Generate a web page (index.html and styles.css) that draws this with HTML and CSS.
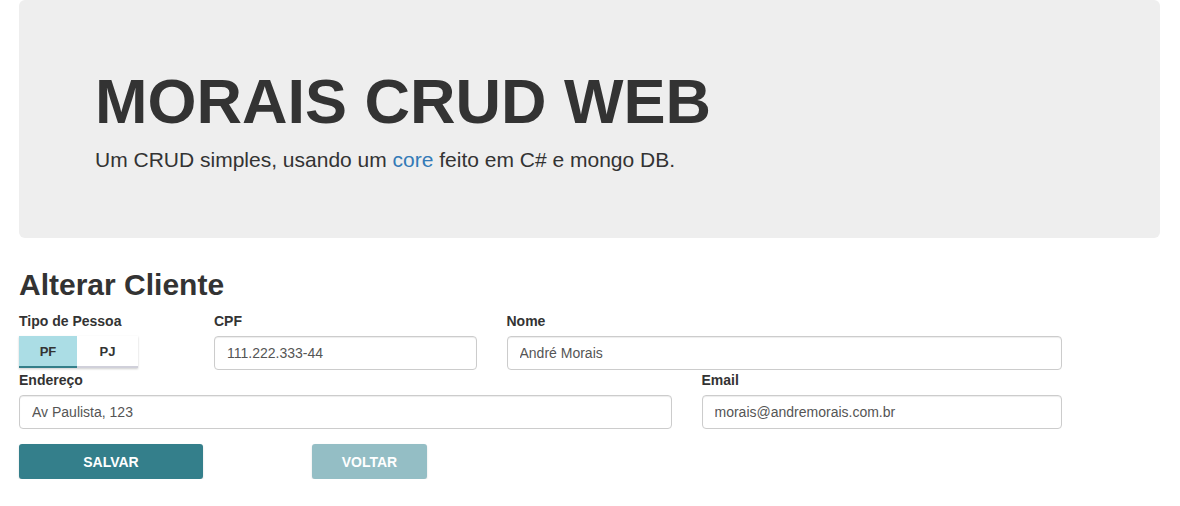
FILE: index.html
```html
<!DOCTYPE html>
<html lang="pt-BR">
<head>
<meta charset="utf-8">
<title>Morais CRUD Web</title>
<link rel="stylesheet" href="styles.css">
</head>
<body>
<div class="container">
  <div class="jumbotron">
    <h1 class="title">MORAIS CRUD WEB</h1>
    <p class="lead">Um CRUD simples, usando um <a href="#">core</a> feito em C# e mongo DB.</p>
  </div>

  <h2 class="page-title">Alterar Cliente</h2>
  <form class="form">
    <div class="row">
      <div class="col col-2">
        <label class="label">Tipo de Pessoa</label>
        <div class="toggle">
          <span class="toggle-btn toggle-pf active">PF</span>
          <span class="toggle-btn toggle-pj">PJ</span>
        </div>
      </div>
      <div class="col col-3">
        <label class="label">CPF</label>
        <input class="input" type="text" value="111.222.333-44">
      </div>
      <div class="col col-6">
        <label class="label">Nome</label>
        <input class="input" type="text" value="André Morais">
      </div>
    </div>
    <div class="row">
      <div class="col col-7">
        <label class="label">Endereço</label>
        <input class="input" type="text" value="Av Paulista, 123">
      </div>
      <div class="col col-4">
        <label class="label">Email</label>
        <input class="input" type="text" value="morais@andremorais.com.br">
      </div>
    </div>
    <div class="actions">
      <button type="button" class="btn btn-primary">SALVAR</button>
      <button type="button" class="btn btn-secondary">VOLTAR</button>
    </div>
  </form>
</div>
</body>
</html>
```
FILE: styles.css
```css
* { box-sizing: border-box; }
html, body {
  margin: 0;
  padding: 0;
  background: #fff;
  font-family: "Liberation Sans", Arial, sans-serif;
  color: #333;
  font-size: 14px;
}
.container {
  width: 1141px;
  margin-left: 19px;
}
.jumbotron {
  background: #eeeeee;
  border-radius: 6px;
  height: 238px;
  padding: 66px 76px 0;
}
.title {
  margin: 0;
  font-size: 63px;
  font-weight: bold;
  line-height: 70px;
  color: #333;
}
.lead {
  margin: 9px 0 0;
  font-size: 21px;
  line-height: 30px;
}
.lead a { color: #337ab7; text-decoration: none; }
.page-title {
  margin: 29px 0 0;
  font-size: 30px;
  font-weight: bold;
  line-height: 36px;
}
.form { margin-top: 8px; }
.row {
  display: grid;
  grid-template-columns: repeat(12, 1fr);
  width: 1170px;
}
.col {
  display: flex;
  flex-direction: column;
  align-items: flex-start;
  padding-right: 30px;
}
.col-2 { grid-column: span 2; }
.col-3 { grid-column: span 3; }
.col-4 { grid-column: span 4; }
.col-6 { grid-column: span 6; }
.col-7 { grid-column: span 7; }
.label {
  font-size: 14px;
  font-weight: bold;
  line-height: 20px;
  margin-bottom: 5px;
  color: #333;
}
.input {
  height: 34px;
  border: 1px solid #ccc;
  border-radius: 4px;
  padding: 6px 12px;
  font-family: "Liberation Sans", Arial, sans-serif;
  font-size: 14px;
  color: #555;
  background: #fff;
  box-shadow: inset 0 1px 1px rgba(0,0,0,.075);
  width: 100%;
}
.toggle {
  display: flex;
  width: 119px;
  height: 32px;
  box-shadow: 0 1px 2px rgba(0,0,0,.2);
}
.toggle-btn {
  display: flex;
  align-items: center;
  justify-content: center;
  font-size: 13px;
  font-weight: bold;
  color: #333;
  background: #fff;
  border-bottom: 2px solid #d0d0da;
}
.toggle-pf { width: 58px; }
.toggle-pj { flex: 1; }
.toggle-btn.active {
  background: #abdde5;
  border-bottom-color: #347f8a;
}
.actions {
  display: flex;
  margin-top: 15px;
  gap: 109px;
}
.btn {
  height: 35px;
  border: none;
  border-radius: 3px;
  color: #fff;
  font-family: "Liberation Sans", Arial, sans-serif;
  font-size: 14px;
  font-weight: bold;
  box-shadow: 0 1px 2px rgba(0,0,0,.15);
}
.btn-primary { width: 184px; background: #347f8b; }
.btn-secondary { width: 115px; background: #94bec5; }
```
